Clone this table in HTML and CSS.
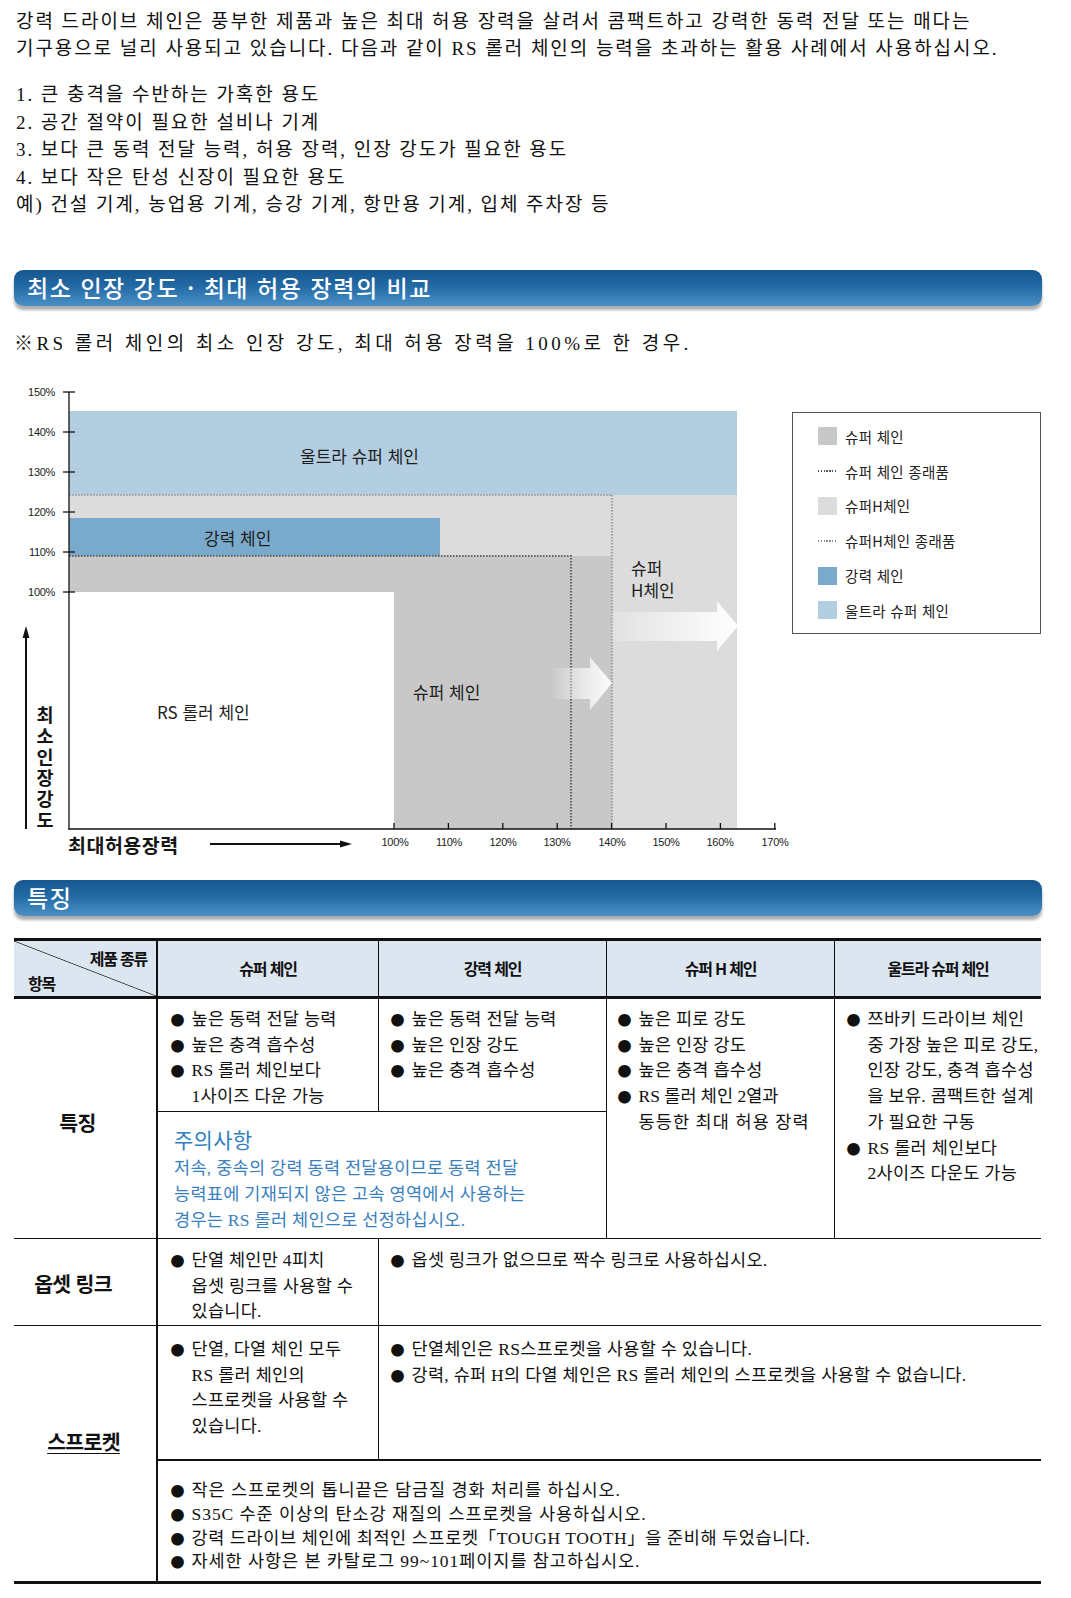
FILE: index.html
```html
<!DOCTYPE html>
<html lang="ko">
<head>
<meta charset="utf-8">
<title>강력 드라이브 체인</title>
<link rel="stylesheet" href="styles.css">
</head>
<body>
<div class="page">
  <p class="intro">강력 드라이브 체인은 풍부한 제품과 높은 최대 허용 장력을 살려서 콤팩트하고 강력한 동력 전달 또는 매다는<br>기구용으로 널리 사용되고 있습니다. 다음과 같이 RS 롤러 체인의 능력을 초과하는 활용 사례에서 사용하십시오.</p>
  <p class="intro list">1. 큰 충격을 수반하는 가혹한 용도<br>2. 공간 절약이 필요한 설비나 기계<br>3. 보다 큰 동력 전달 능력, 허용 장력, 인장 강도가 필요한 용도<br>4. 보다 작은 탄성 신장이 필요한 용도<br>예) 건설 기계, 농업용 기계, 승강 기계, 항만용 기계, 입체 주차장 등</p>

  <h2 class="bar">최소 인장 강도 · 최대 허용 장력의 비교</h2>
  <p class="note">※RS 롤러 체인의 최소 인장 강도, 최대 허용 장력을 100%로 한 경우.</p>

  <div class="chart">
    <svg class="plot" width="792" height="490" viewBox="0 0 792 490">
      <defs>
        <linearGradient id="ga1" x1="0" y1="0" x2="1" y2="0">
          <stop offset="0" stop-color="#ffffff" stop-opacity="0"/>
          <stop offset="0.55" stop-color="#ffffff" stop-opacity="0.6"/>
          <stop offset="1" stop-color="#ffffff" stop-opacity="0.95"/>
        </linearGradient>
        <linearGradient id="ga2" x1="0" y1="0" x2="1" y2="0">
          <stop offset="0" stop-color="#ffffff" stop-opacity="0.15"/>
          <stop offset="1" stop-color="#ffffff" stop-opacity="1"/>
        </linearGradient>
      </defs>
      <rect x="69" y="125" width="668" height="334" fill="#dcdcdc"/>
      <rect x="69" y="41" width="668" height="84" fill="#b3cde1"/>
      <rect x="69" y="148" width="371" height="38" fill="#7aaacb"/>
      <polygon points="69,186 612,186 612,459 394,459 394,222 69,222" fill="#c8c8c8"/>
      <rect x="69" y="222" width="325" height="237" fill="#ffffff"/>
      <polyline points="69,125 612,125 612,459" fill="none" stroke="#a4a4a4" stroke-width="2.2" stroke-dasharray="1.6 1.4"/>
      <polyline points="69,186 571,186 571,459" fill="none" stroke="#686868" stroke-width="2.2" stroke-dasharray="1.6 1.4"/>
      <path d="M550,298 H590 V287 L612,313 L590,340 V329 H550 Z" fill="url(#ga1)"/>
      <path d="M612,242 H717 V231 L738,256 L717,281 V271 H612 Z" fill="url(#ga2)"/>

      <g stroke="#111" stroke-width="1.3">
        <line x1="69" y1="22" x2="69" y2="459.6"/>
        <line x1="68.4" y1="459" x2="776" y2="459"/>
        <line x1="63" y1="22" x2="75" y2="22"/>
        <line x1="63" y1="62" x2="75" y2="62"/>
        <line x1="63" y1="102" x2="75" y2="102"/>
        <line x1="63" y1="142" x2="75" y2="142"/>
        <line x1="63" y1="182" x2="75" y2="182"/>
        <line x1="63" y1="222" x2="75" y2="222"/>
        <line x1="394" y1="453" x2="394" y2="459"/>
        <line x1="448.4" y1="453" x2="448.4" y2="459"/>
        <line x1="502.8" y1="453" x2="502.8" y2="459"/>
        <line x1="557.2" y1="453" x2="557.2" y2="459"/>
        <line x1="611.6" y1="453" x2="611.6" y2="459"/>
        <line x1="666" y1="453" x2="666" y2="459"/>
        <line x1="720.4" y1="453" x2="720.4" y2="459"/>
        <line x1="774.8" y1="453" x2="774.8" y2="459"/>
      </g>
      <g class="tick" text-anchor="end">
        <text x="55" y="26">150%</text>
        <text x="55" y="66">140%</text>
        <text x="55" y="106">130%</text>
        <text x="55" y="146">120%</text>
        <text x="55" y="186">110%</text>
        <text x="55" y="226">100%</text>
      </g>
      <g class="tick" text-anchor="middle">
        <text x="395" y="476">100%</text>
        <text x="449" y="476">110%</text>
        <text x="503" y="476">120%</text>
        <text x="557" y="476">130%</text>
        <text x="612" y="476">140%</text>
        <text x="666" y="476">150%</text>
        <text x="720" y="476">160%</text>
        <text x="775" y="476">170%</text>
      </g>
      <g class="lbl">
        <text x="300" y="93">울트라 슈퍼 체인</text>
        <text x="204" y="175">강력 체인</text>
        <text x="157" y="349">RS 롤러 체인</text>
        <text x="413" y="329">슈퍼 체인</text>
        <text x="631" y="205">슈퍼</text>
        <text x="631" y="227">H체인</text>
      </g>
      <line x1="26" y1="266" x2="26" y2="459" stroke="#111" stroke-width="2"/>
      <polygon points="26,256 22.6,268 29.4,268" fill="#111"/>
      <text class="axl axv" x="45" y="335.5">최소인장강도</text>
      <text class="axl axx" x="68" y="483">최대허용장력</text>
      <line x1="210" y1="474" x2="343" y2="474" stroke="#111" stroke-width="2"/>
      <polygon points="352,474 340,470.6 340,477.4" fill="#111"/>
    </svg>

    <div class="legend">
      <div class="lg"><span class="sw sw-super"></span>슈퍼 체인</div>
      <div class="lg"><span class="sw sw-dot-dark"></span>슈퍼 체인 종래품</div>
      <div class="lg"><span class="sw sw-h"></span>슈퍼H체인</div>
      <div class="lg"><span class="sw sw-dot-light"></span>슈퍼H체인 종래품</div>
      <div class="lg"><span class="sw sw-strong"></span>강력 체인</div>
      <div class="lg"><span class="sw sw-ultra"></span>울트라 슈퍼 체인</div>
    </div>
  </div>

  <h2 class="bar bar2">특징</h2>

  <div class="spec">
    <div class="hc diag">
      <span class="kind">제품 종류</span>
      <span class="item">항목</span>
    </div>
    <div class="hc br1">슈퍼 체인</div>
    <div class="hc br1">강력 체인</div>
    <div class="hc br1">슈퍼 H 체인</div>
    <div class="hc">울트라 슈퍼 체인</div>

    <div class="lab lab1 rs2">특징</div>
    <div class="cell r1 c2 br1 bb1">
      <div class="li"><span class="dot">●</span><span>높은 동력 전달 능력</span></div>
      <div class="li"><span class="dot">●</span><span>높은 충격 흡수성</span></div>
      <div class="li"><span class="dot">●</span><span>RS 롤러 체인보다<br>1사이즈 다운 가능</span></div>
    </div>
    <div class="cell r1 br1 bb1">
      <div class="li"><span class="dot">●</span><span>높은 동력 전달 능력</span></div>
      <div class="li"><span class="dot">●</span><span>높은 인장 강도</span></div>
      <div class="li"><span class="dot">●</span><span>높은 충격 흡수성</span></div>
    </div>
    <div class="cell r1 rs2 br1 bb1 c4">
      <div class="li"><span class="dot">●</span><span>높은 피로 강도</span></div>
      <div class="li"><span class="dot">●</span><span>높은 인장 강도</span></div>
      <div class="li"><span class="dot">●</span><span>높은 충격 흡수성</span></div>
      <div class="li"><span class="dot">●</span><span><span class="ls0">RS 롤러 체인 2열과</span><br><span class="ls11">동등한 최대 허용 장력</span></span></div>
    </div>
    <div class="cell r1 rs2 bb1">
      <div class="li"><span class="dot">●</span><span>쯔바키 드라이브 체인<br>중 가장 높은 피로 강도,<br>인장 강도, 충격 흡수성<br>을 보유. 콤팩트한 설계<br>가 필요한 구동</span></div>
      <div class="li"><span class="dot">●</span><span>RS 롤러 체인보다<br>2사이즈 다운도 가능</span></div>
    </div>
    <div class="cell caution cs2 br1 bb1">
      <div class="ct">주의사항</div>
      <div class="cb">저속, 중속의 강력 동력 전달용이므로 동력 전달<br>능력표에 기재되지 않은 고속 영역에서 사용하는<br>경우는 RS 롤러 체인으로 선정하십시오.</div>
    </div>

    <div class="lab lab2">옵셋 링크</div>
    <div class="cell r2 c2 br1 bb1">
      <div class="li"><span class="dot">●</span><span>단열 체인만 4피치<br>옵셋 링크를 사용할 수<br>있습니다.</span></div>
    </div>
    <div class="cell r2 cs3 bb1">
      <div class="li"><span class="dot">●</span><span>옵셋 링크가 없으므로 짝수 링크로 사용하십시오.</span></div>
    </div>

    <div class="lab lab3 rs2"><span class="u">스프로켓</span></div>
    <div class="cell r3 c2 br1 bb2">
      <div class="li"><span class="dot">●</span><span>단열, 다열 체인 모두<br>RS 롤러 체인의<br>스프로켓을 사용할 수<br>있습니다.</span></div>
    </div>
    <div class="cell r3 cs3 bb2">
      <div class="li"><span class="dot">●</span><span>단열체인은 RS스프로켓을 사용할 수 있습니다.</span></div>
      <div class="li"><span class="dot">●</span><span>강력, 슈퍼 H의 다열 체인은 RS 롤러 체인의 스프로켓을 사용할 수 없습니다.</span></div>
    </div>
    <div class="cell r4 c2 cs4 bb3">
      <div class="li"><span class="dot">●</span><span>작은 스프로켓의 톱니끝은 담금질 경화 처리를 하십시오.</span></div>
      <div class="li"><span class="dot">●</span><span>S35C 수준 이상의 탄소강 재질의 스프로켓을 사용하십시오.</span></div>
      <div class="li"><span class="dot">●</span><span class="ls06">강력 드라이브 체인에 최적인 스프로켓「TOUGH TOOTH」을 준비해 두었습니다.</span></div>
      <div class="li"><span class="dot">●</span><span>자세한 사항은 본 카탈로그 99~101페이지를 참고하십시오.</span></div>
    </div>
  </div>
</div>
</body>
</html>
```

FILE: styles.css
```css
* { box-sizing: border-box; }

html, body {
  margin: 0;
  padding: 0;
  background: #ffffff;
}

body {
  width: 1071px;
  color: #111111;
  font-family: "Liberation Serif", "Noto Sans CJK KR", serif;
}

.page {
  display: flow-root;
  padding-bottom: 12px;
}

.intro {
  margin: 7.7px 0 0 16px;
  font-size: 19px;
  line-height: 27.5px;
  letter-spacing: 1.95px;
  white-space: nowrap;
}

.intro.list {
  margin-top: 18.8px;
}

.bar {
  margin: 51px 0 0 14px;
  width: 1028px;
  height: 36px;
  padding-left: 13px;
  border-radius: 9px;
  background: linear-gradient(180deg, #175790 0%, #236aa5 45%, #3c83bb 80%, #4a8ec3 100%);
  box-shadow: 0 4px 3px rgba(0, 0, 0, 0.32);
  color: #ffffff;
  font-family: "Noto Sans CJK KR", sans-serif;
  font-weight: 500;
  font-size: 23px;
  line-height: 35px;
  letter-spacing: 1.55px;
}

.bar2 {
  margin-top: 20px;
}

.note {
  margin: 26px 0 0 14px;
  font-size: 19px;
  line-height: 24px;
  letter-spacing: 3.45px;
  white-space: nowrap;
}

/* chart */
.chart {
  display: flex;
  align-items: flex-start;
  margin-top: 14px;
  height: 490px;
}

.plot {
  display: block;
  flex: none;
}

.tick {
  font-family: "Liberation Sans", sans-serif;
  font-size: 11px;
  letter-spacing: -0.3px;
  fill: #1a1a1a;
}

.lbl {
  font-family: "Noto Sans CJK KR", sans-serif;
  font-size: 17px;
  fill: #1e1e1e;
}

.axl {
  font-family: "Noto Sans CJK KR", sans-serif;
  font-weight: 700;
  fill: #151515;
}

.axv {
  font-size: 18.5px;
  letter-spacing: 2.5px;
  writing-mode: vertical-rl;
}

.axx {
  font-size: 19.5px;
  letter-spacing: 0.5px;
}

.legend {
  flex: none;
  margin-top: 42px;
  width: 249px;
  height: 222px;
  border: 1px solid #555555;
  padding: 6px 0 0 25px;
  font-family: "Noto Sans CJK KR", sans-serif;
  font-size: 14.5px;
  letter-spacing: 0.3px;
  color: #222222;
}

.lg {
  display: flex;
  align-items: center;
  height: 34.8px;
}

.sw {
  flex: none;
  width: 19px;
  height: 18px;
  margin-right: 8px;
}

.sw-super { background: #c8c8c8; }
.sw-h { background: #dcdcdc; }
.sw-strong { background: #7aaacb; }
.sw-ultra { background: #b3cde1; }

.sw-dot-dark,
.sw-dot-light {
  height: 1.6px;
  background: repeating-linear-gradient(90deg, #555555 0 1.4px, transparent 1.4px 2.8px);
}

.sw-dot-light {
  background: repeating-linear-gradient(90deg, #8a8a8a 0 1.4px, transparent 1.4px 2.8px);
}

/* table */
.spec {
  margin: 22px 0 0 14px;
  width: 1027px;
  display: grid;
  grid-template-columns: 144px 221px 228px 228px 206px;
  grid-template-rows: 58px 113px 127px 87px 135px 123px;
  border-top: 3px solid #111111;
}

.hc {
  display: flex;
  align-items: center;
  justify-content: center;
  background: #dce6f0;
  border-bottom: 3px solid #111111;
  font-family: "Noto Sans CJK KR", sans-serif;
  font-weight: 700;
  font-size: 16px;
  letter-spacing: -1.2px;
  color: #111111;
}

.diag {
  flex-direction: column;
  align-items: stretch;
  justify-content: space-between;
  padding: 7px 9px 3px 14px;
  border-right: 2px solid #111111;
  line-height: 20px;
  background:
    linear-gradient(to top right, transparent calc(50% - 0.8px), #333333 50%, transparent calc(50% + 0.8px)),
    #dce6f0;
}

.kind { align-self: flex-end; }
.item { align-self: flex-start; }

.br1 { border-right: 1px solid #111111; }
.bb1 { border-bottom: 1px solid #111111; }
.bb2 { border-bottom: 2px solid #111111; }
.bb3 { border-bottom: 3px solid #111111; }

.rs2 { grid-row: span 2; }
.cs2 { grid-column: span 2; }
.cs3 { grid-column: span 3; }
.cs4 { grid-column: span 4; }

.lab {
  display: flex;
  align-items: center;
  justify-content: center;
  border-right: 2px solid #111111;
  font-family: "Noto Sans CJK KR", sans-serif;
  font-weight: 700;
  font-size: 20.5px;
  letter-spacing: -0.7px;
  color: #111111;
}

.lab1 {
  border-bottom: 1px solid #111111;
  padding: 8px 15px 0 0;
}

.lab2 {
  border-bottom: 1px solid #111111;
  padding: 2px 24px 0 0;
}

.lab3 {
  border-bottom: 3px solid #111111;
  padding: 0 3px 24px 0;
}

.u {
  text-decoration: underline;
  text-decoration-thickness: 1px;
  text-underline-offset: 3px;
}

.cell {
  font-size: 17.5px;
  line-height: 25.7px;
  letter-spacing: 0.3px;
  white-space: nowrap;
  padding-left: 11.5px;
}

.c2 { padding-left: 12.5px; }
.c4 { padding-left: 10.5px; }

.r1 { padding-top: 8.1px; }
.r2 { padding-top: 9.2px; line-height: 25.5px; }
.r3 { padding-top: 11.2px; line-height: 25.5px; }
.r4 { padding-top: 18px; line-height: 23.8px; letter-spacing: 0.95px; }

.li {
  display: flex;
}

.dot {
  flex: none;
  width: 21px;
  font-family: "Noto Sans CJK KR", sans-serif;
  font-size: 14px;
  letter-spacing: 0;
}

.ls0 { letter-spacing: 0; }
.ls11 { letter-spacing: 1.1px; }
.ls06 { letter-spacing: 0.6px; }

.caution {
  padding: 16px 0 0 16px;
  color: #3a80bd;
}

.ct {
  font-size: 21px;
  line-height: 27px;
  color: #2f7fc0;
}

.cb {
  line-height: 26px;
}
```
